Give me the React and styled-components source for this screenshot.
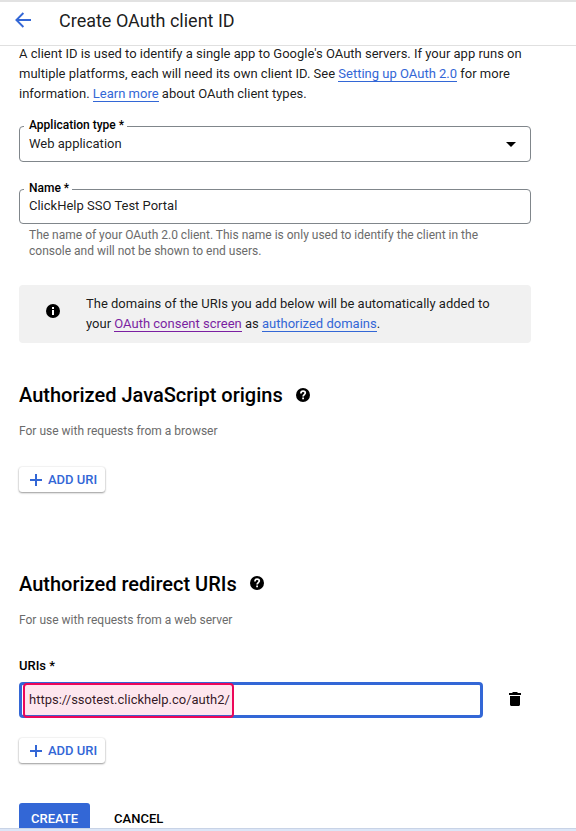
import React, { useState } from "react";
import styled, { createGlobalStyle, css } from "styled-components";

const GlobalStyle = createGlobalStyle`
  * {
    box-sizing: border-box;
  }

  body {
    margin: 0;
    background: #fff;
    font-family: Roboto, "Liberation Sans", sans-serif;
    font-size: 13px;
    line-height: 20px;
    color: rgba(0, 0, 0, 0.9);
  }
`;

const Page = styled.div`
  height: 831px;
  display: flex;
  flex-direction: column;
  overflow: hidden;
`;

const Header = styled.header`
  flex: none;
  height: 46px;
  display: flex;
  align-items: center;
  gap: 28px;
  padding: 0 0 5px 15px;
  border-top: 2px solid #e2e2e2;
  border-bottom: 1px solid #e0e0e0;

  svg {
    margin-bottom: 2px;
  }
`;

const Title = styled.h1`
  margin: 0;
  font-size: 18px;
  font-weight: 400;
  line-height: 24px;
`;

const Content = styled.main`
  flex: 1;
  min-height: 0;
  padding: 0 45px 0 19px;
  overflow: hidden;
`;

const Intro = styled.p`
  margin: -2px 0 0;
`;

const Link = styled.a`
  color: ${({ $visited }) => ($visited ? "#7b1fa2" : "#3367d6")};
  border-bottom: 1px solid currentColor;
  text-decoration: none;
  cursor: pointer;
`;

const Field = styled.fieldset`
  margin: ${({ $top }) => $top}px 0 0;
  padding: 0 9px;
  height: ${({ $height }) => $height}px;
  min-width: 0;
  border: 1px solid #80868b;
  border-radius: 4px;
`;

const Legend = styled.legend`
  position: relative;
  top: -1px;
  margin-left: -5px;
  padding: 0 3px 0 5px;
  font-size: 12px;
  font-weight: 500;
  line-height: 14px;
  color: #000;
`;

const FieldValue = styled.div`
  display: flex;
  justify-content: space-between;
  align-items: center;
  height: ${({ $height }) => $height}px;
  padding-right: 5px;
`;

const Helper = styled.p`
  margin: 3px 0 0;
  padding: 0 10px;
  font-size: 12px;
  line-height: 16px;
  color: #6b6b6b;
`;

const Notice = styled.div`
  display: flex;
  align-items: center;
  gap: 26px;
  height: 58px;
  margin-top: 26px;
  padding: 0 20px 1px 27px;
  border-radius: 4px;
  background: #f1f1f1;

  svg {
    flex: none;
    margin-bottom: 5px;
  }
`;

const NoticeText = styled.p`
  margin: 0;
`;

const Section = styled.section`
  margin-top: ${({ $top }) => $top}px;
`;

const SectionTitle = styled.h2`
  display: flex;
  align-items: center;
  gap: 13px;
  margin: 0;
  font-size: 20px;
  font-weight: 500;
  line-height: 24px;
  color: #000;

  svg {
    margin-bottom: ${({ $iconLift = 0 }) => $iconLift * 2}px;
  }
`;

const SectionHint = styled.p`
  margin: 14px 0 0;
  font-size: 12px;
  color: #6b6b6b;
`;

const UriLabel = styled.label`
  display: block;
  margin-top: 28px;
  font-size: 13px;
  font-weight: 500;
  line-height: 16px;
  color: #000;
`;

const UriRow = styled.div`
  display: flex;
  align-items: center;
  gap: 26px;
  margin-top: 8px;

  > svg {
    margin-bottom: 2px;
  }
`;

const UriBox = styled.div`
  position: relative;
  display: flex;
  align-items: center;
  width: 464px;
  height: 36px;
  padding: 0 7px;
  border: 3px solid #3367d6;
  border-radius: 4px;
`;

// callout drawn over the value, it overlaps the focus ring
const Highlight = styled.span`
  position: absolute;
  left: 1px;
  top: -2px;
  width: 211px;
  height: 35px;
  border: 2px solid #ec0759;
  border-radius: 4px;
  background: rgba(236, 7, 89, 0.1);
`;

const buttonBase = css`
  display: flex;
  align-items: center;
  border: 0;
  border-radius: 3px;
  font-family: inherit;
  font-size: 13px;
  font-weight: 500;
  cursor: pointer;
`;

const AddButton = styled.button`
  ${buttonBase}
  gap: 6px;
  width: 86px;
  height: 25px;
  margin-top: ${({ $top }) => $top}px;
  padding: 0 0 1px 11px;
  background: #fff;
  color: #3367d6;
  box-shadow: 0 1px 2px rgba(0, 0, 0, 0.38), 0 0 2px rgba(0, 0, 0, 0.12);

  svg {
    margin-top: 2px;
  }
`;

const Actions = styled.div`
  display: flex;
  gap: 12px;
  margin-top: 40px;
`;

const ActionButton = styled.button`
  ${buttonBase}
  height: 32px;
  padding: 0 12px 2px;
  background: ${({ $primary }) => ($primary ? "#3367d6" : "transparent")};
  color: ${({ $primary }) => ($primary ? "#fff" : "#000")};
`;

const BottomBar = styled.div`
  flex: none;
  height: 3px;
  border-top: 1px solid #c8d3e6;
  background: #dce6f7;
`;

const BackIcon = () => (
  <svg width="16" height="16" viewBox="0 0 16 16" fill="none">
    <path d="M16 8H1.8M8.4 1 1.4 8l7 7" stroke="#3367d6" strokeWidth="1.9" />
  </svg>
);

const InfoIcon = () => (
  <svg width="14" height="14" viewBox="0 0 14 14">
    <circle cx="7" cy="7" r="7" fill="#000" />
    <path d="M6 3h2v2H6zM6 6h2v5H6z" fill="#fff" />
  </svg>
);

const HelpIcon = () => (
  <svg width="14" height="14" viewBox="0 0 14 14">
    <circle cx="7" cy="7" r="7" fill="#000" />
    <path
      d="M4.9 5.4C4.9 4 5.8 3.2 7.1 3.2s2.2.8 2.2 1.9c0 1.5-2.2 1.6-2.2 3.4"
      fill="none"
      stroke="#fff"
      strokeWidth="1.7"
    />
    <path d="M6.2 9.6H8v1.7H6.2z" fill="#fff" />
  </svg>
);

const PlusIcon = () => (
  <svg width="12" height="12" viewBox="0 0 12 12">
    <path d="M5 0h2v5h5v2H7v5H5V7H0V5h5z" fill="#3367d6" />
  </svg>
);

const CaretIcon = () => (
  <svg width="10" height="5" viewBox="0 0 10 5">
    <path d="M0 0h10L5 5z" fill="#000" />
  </svg>
);

const TrashIcon = () => (
  <svg width="12" height="14" viewBox="0 0 12 14">
    <path
      d="M3.5 0h5v1H12v2H0V1h3.5zM1 4h10v8.5c0 .8-.7 1.5-1.5 1.5h-7C1.7 14 1 13.3 1 12.5z"
      fill="#000"
    />
  </svg>
);

const App = () => {
  const [uri] = useState("https://ssotest.clickhelp.co/auth2/");

  return (
    <>
      <GlobalStyle />
      <Page>
        <Header>
          <BackIcon />
          <Title>Create OAuth client ID</Title>
        </Header>

        <Content>
          <Intro>
            A client ID is used to identify a single app to Google's OAuth
            servers. If your app runs on
            <br />
            multiple platforms, each will need its own client ID. See{" "}
            <Link>Setting up OAuth 2.0</Link> for more
            <br />
            information. <Link>Learn more</Link> about OAuth client types.
          </Intro>

          <Field $top={15} $height={43}>
            <Legend>Application type *</Legend>
            <FieldValue $height={22}>
              Web application
              <CaretIcon />
            </FieldValue>
          </Field>

          <Field $top={20} $height={42}>
            <Legend>Name *</Legend>
            <FieldValue $height={20}>ClickHelp SSO Test Portal</FieldValue>
          </Field>
          <Helper>
            The name of your OAuth 2.0 client. This name is only used to
            identify the client in the
            <br />
            console and will not be shown to end users.
          </Helper>

          <Notice>
            <InfoIcon />
            <NoticeText>
              The domains of the URIs you add below will be automatically added
              to
              <br />
              your <Link $visited>OAuth consent screen</Link> as{" "}
              <Link>authorized domains</Link>.
            </NoticeText>
          </Notice>

          <Section $top={40}>
            <SectionTitle>
              Authorized JavaScript origins
              <HelpIcon />
            </SectionTitle>
            <SectionHint>For use with requests from a browser</SectionHint>
            <AddButton $top={26}>
              <PlusIcon />
              ADD URI
            </AddButton>
          </Section>

          <Section $top={80}>
            <SectionTitle $iconLift={1}>
              Authorized redirect URIs
              <HelpIcon />
            </SectionTitle>
            <SectionHint>For use with requests from a web server</SectionHint>
            <UriLabel>URIs *</UriLabel>
            <UriRow>
              <UriBox>
                {uri}
                <Highlight />
              </UriBox>
              <TrashIcon />
            </UriRow>
            <AddButton $top={20}>
              <PlusIcon />
              ADD URI
            </AddButton>
          </Section>

          <Actions>
            <ActionButton $primary>CREATE</ActionButton>
            <ActionButton>CANCEL</ActionButton>
          </Actions>
        </Content>

        <BottomBar />
      </Page>
    </>
  );
};

export default App;
